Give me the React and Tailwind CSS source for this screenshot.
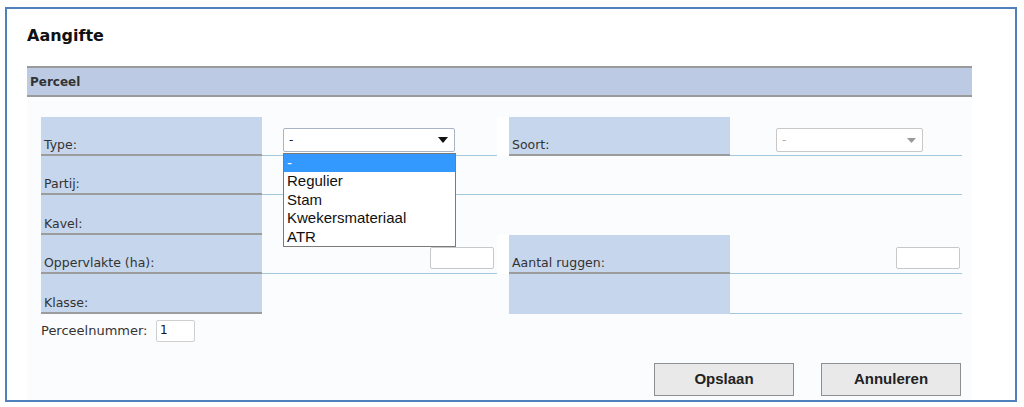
import React from "react";

const font = { fontFamily: '"DejaVu Sans", Verdana, sans-serif' };

function LabelCell({ children, line = true }) {
  return (
    <div
      className={`bg-[#c6d6ec] flex items-end pl-[3px] text-[12.5px] leading-[18px] text-[#333] ${
        line ? "border-b-2 border-[#9c9c9c]" : ""
      }`}
    >
      {children}
    </div>
  );
}

function FieldCell({ children, className = "", line = true }) {
  return (
    <div className={`relative ${line ? "border-b border-[#a3c9df]" : ""} ${className}`}>
      {children}
    </div>
  );
}

const options = ["-", "Regulier", "Stam", "Kwekersmateriaal", "ATR"];

export default function App() {
  return (
    <div className="w-[1024px] h-[407px] bg-white pt-[7px] pl-[5px] overflow-hidden" style={font}>
      <div className="w-[1012px] h-[395px] border-2 border-[#4f81bd] bg-white px-[20px] flex flex-col">
        <div className="h-[57px] pt-[17px]">
          <h1 className="text-[16px] font-bold text-[#111] leading-[19px]">Aangifte</h1>
        </div>

        <div className="w-[945px] h-[31px] bg-[#bccbe3] border-t-2 border-b-2 border-[#9a9a9a] flex items-center pl-[3px]">
          <span className="text-[12px] font-bold text-[#333]">Perceel</span>
        </div>

        <div className="w-[945px] flex-1 bg-[#fbfcfe] pl-[14px] pt-[20px] flex flex-col">
          <div className="grid grid-cols-[221px_235px_12px_221px_232px] grid-rows-[39px_39px_40px_39px_40px]">
            {/* row 1 */}
            <LabelCell>Type:</LabelCell>
            <FieldCell className="z-10">
              <div className="ml-[21px] mt-[11px] w-[172px] h-[24px] bg-white border border-[#a7b4c4] rounded-[2px] flex items-center justify-between pl-[5px] pr-[6px]">
                <span className="text-[12px] text-[#222]">-</span>
                <svg width="10" height="6" viewBox="0 0 10 6">
                  <path d="M0 0h10L5 6z" fill="#111" />
                </svg>
              </div>
              <ul
                className="absolute left-[21px] top-[36px] w-[173px] bg-white border border-[#7a7a7a] text-[15px] text-[#111] leading-[18.4px]"
                style={{ fontFamily: '"Liberation Sans", Arial, sans-serif' }}
              >
                {options.map((o, i) => (
                  <li
                    key={o}
                    className={`pl-[3px] h-[18.4px] ${i === 0 ? "bg-[#3399ff] text-white" : ""}`}
                  >
                    {o}
                  </li>
                ))}
              </ul>
            </FieldCell>
            <div className="bg-white" />
            <LabelCell>Soort:</LabelCell>
            <FieldCell>
              <div className="ml-[46px] mt-[11px] w-[147px] h-[24px] bg-white border border-[#c8c8c8] rounded-[2px] flex items-center justify-between pl-[5px] pr-[6px]">
                <span className="text-[12px] text-[#aaa]">-</span>
                <svg width="9" height="5" viewBox="0 0 9 5">
                  <path d="M0 0h9L4.5 5z" fill="#999" />
                </svg>
              </div>
            </FieldCell>

            {/* row 2 */}
            <LabelCell>Partij:</LabelCell>
            <FieldCell className="col-span-4" />

            {/* row 3 */}
            <LabelCell>Kavel:</LabelCell>
            <div className="col-span-4" />

            {/* row 4 */}
            <LabelCell>Oppervlakte (ha):</LabelCell>
            <FieldCell className="flex justify-end items-end pb-[4px] pr-[3px]">
              <div className="w-[64px] h-[22px] bg-white border border-[#c8c8c8] rounded-[2px]" />
            </FieldCell>
            <div className="bg-white" />
            <LabelCell>Aantal ruggen:</LabelCell>
            <FieldCell className="flex justify-end items-end pb-[4px] pr-[2px]">
              <div className="w-[64px] h-[22px] bg-white border border-[#c8c8c8] rounded-[2px]" />
            </FieldCell>

            {/* row 5 */}
            <LabelCell>Klasse:</LabelCell>
            <div />
            <div />
            <LabelCell line={false} />
            <FieldCell />
          </div>

          <div className="flex items-center mt-[6px]">
            <span className="w-[115px] text-[13px] text-[#333]">Perceelnummer:</span>
            <div className="w-[39px] h-[22px] bg-white border border-[#cfcfcf] rounded-[2px] text-[12px] text-[#111] pl-[3px] leading-[18px]">
              1
            </div>
          </div>

          <div
            className="flex justify-end gap-[27px] pr-[11px] mt-[21px]"
            style={{ fontFamily: '"Liberation Sans", Arial, sans-serif' }}
          >
            <button className="w-[140px] h-[33px] bg-[#e9e9e9] border border-[#8f8f8f] text-[15px] font-bold text-[#222]">
              Opslaan
            </button>
            <button className="w-[140px] h-[33px] bg-[#e9e9e9] border border-[#8f8f8f] text-[15px] font-bold text-[#222]">
              Annuleren
            </button>
          </div>
        </div>
      </div>
    </div>
  );
}
